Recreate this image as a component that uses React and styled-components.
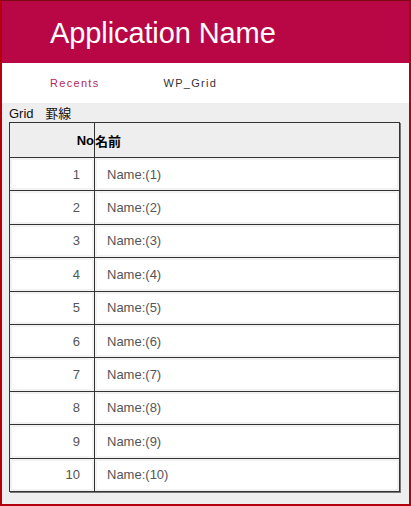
import React from 'react';
import styled, { createGlobalStyle } from 'styled-components';

const Global = createGlobalStyle`
    html, body {
        margin: 0;
        padding: 0;
        background: #fff;
    }
    body {
        font-family: "Liberation Sans", Arial, "Noto Sans CJK JP", sans-serif;
    }
`;

const Frame = styled.div`
    box-sizing: border-box;
    width: 411px;
    height: 506px;
    border-top: 1px solid #7a0a12;
    border-left: 2px solid #b4000c;
    border-right: 2px solid #b4000c;
    border-bottom: 2px solid #b4000c;
    background: #eeeeee;
    display: flex;
    flex-direction: column;
    overflow: hidden;
`;

const Header = styled.header`
    height: 62px;
    background: #b90745;
    display: flex;
    align-items: center;
    padding-left: 48px;
`;

const Title = styled.h1`
    margin: 2px 0 0;
    color: #fff;
    font-size: 29px;
    font-weight: normal;
    letter-spacing: -0.1px;
`;

const Nav = styled.nav`
    height: 40px;
    background: #fff;
    display: flex;
    align-items: center;
    padding-left: 48px;
    gap: 64px;
`;

const NavItem = styled.span`
    font-size: 11px;
    letter-spacing: 1.3px;
    color: ${p => (p.$active ? '#b22a5e' : '#333')};
`;

const Content = styled.main`
    padding: 2px 9px 0 7px;
`;

const Caption = styled.div`
    font-size: 13px;
    color: #111;
    height: 17px;
    line-height: 17px;
    word-spacing: 8px;
`;

const Table = styled.table`
    width: 391px;
    border-collapse: collapse;
    box-shadow: 1px 1px 0 #777;
    font-size: 13px;
`;

const HeadCell = styled.th`
    height: 34px;
    padding: 0;
    border: 1px solid #333;
    background: #eeeeee;
    font-weight: bold;
    color: #000;
    text-align: ${p => (p.$num ? 'right' : 'left')};
    width: ${p => (p.$num ? '84px' : 'auto')};
`;

const Cell = styled.td`
    height: 32.4px;
    padding: ${p => (p.$num ? '0 14px 0 0' : '0 0 0 12px')};
    border: 1px solid #333;
    background: #fff;
    box-shadow: inset 0 0 0 2px #f2f2f2;
    color: #555;
    text-align: ${p => (p.$num ? 'right' : 'left')};
`;

const rows = Array.from({ length: 10 }, (_, i) => i + 1);

export default function App() {
    return (
        <>
            <Global />
            <Frame>
                <Header>
                    <Title>Application Name</Title>
                </Header>
                <Nav>
                    <NavItem $active>Recents</NavItem>
                    <NavItem>WP_Grid</NavItem>
                </Nav>
                <Content>
                    <Caption>Grid 罫線</Caption>
                    <Table>
                        <thead>
                            <tr>
                                <HeadCell $num>No</HeadCell>
                                <HeadCell>名前</HeadCell>
                            </tr>
                        </thead>
                        <tbody>
                            {rows.map(n => (
                                <tr key={n}>
                                    <Cell $num>{n}</Cell>
                                    <Cell>Name:({n})</Cell>
                                </tr>
                            ))}
                        </tbody>
                    </Table>
                </Content>
            </Frame>
        </>
    );
}
